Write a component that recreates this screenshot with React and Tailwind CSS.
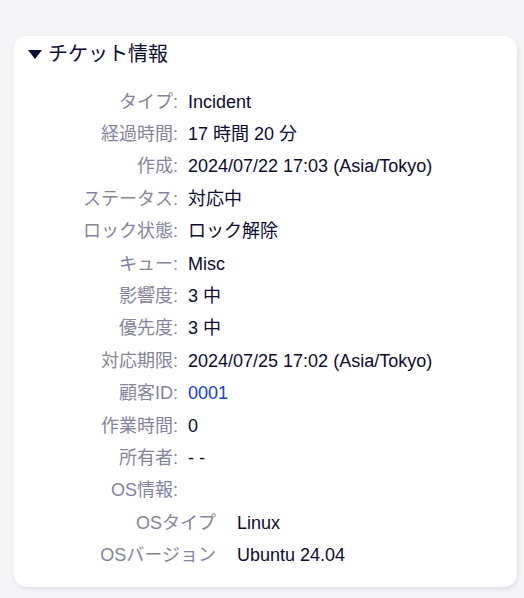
const rows = [
  { label: "タイプ:", value: "Incident" },
  { label: "経過時間:", value: "17 時間 20 分" },
  { label: "作成:", value: "2024/07/22 17:03 (Asia/Tokyo)" },
  { label: "ステータス:", value: "対応中" },
  { label: "ロック状態:", value: "ロック解除" },
  { label: "キュー:", value: "Misc" },
  { label: "影響度:", value: "3 中" },
  { label: "優先度:", value: "3 中" },
  { label: "対応期限:", value: "2024/07/25 17:02 (Asia/Tokyo)" },
  { label: "顧客ID:", value: "0001", link: true },
  { label: "作業時間:", value: "0" },
  { label: "所有者:", value: "- -" },
  { label: "OS情報:", value: "" },
];

const osRows = [
  { label: "OSタイプ", value: "Linux" },
  { label: "OSバージョン", value: "Ubuntu 24.04" },
];

export default function App() {
  return (
    <div
      className="min-h-[598px] bg-[#f5f5f8] pt-[36px] px-[14px] pb-[11px]"
      style={{ fontFamily: '"Liberation Sans", Arial, "Noto Sans CJK JP", sans-serif' }}
    >
      <section className="h-[551px] w-[503px] rounded-[13px] bg-white px-[14px] pt-[1px] shadow-[1px_2px_4px_rgba(40,40,80,0.12)]">
        {/* 見出し */}
        <div className="flex h-[34px] items-center gap-[6px] text-[20px] text-[#0b0b33]">
          <svg width="14" height="9" viewBox="0 0 14 9" className="mt-[1px]">
            <path d="M0 0 H14 L7 9 Z" fill="#0b0b33" />
          </svg>
          <span>チケット情報</span>
        </div>

        <div className="mt-[15px] text-[18px]">
          {rows.map((r) => (
            <div key={r.label} className="flex h-[32.4px] items-center">
              <div className="w-[150px] text-right text-[#8583a0]">{r.label}</div>
              <div className={`pl-[10px] ${r.link ? "text-[#1040f0]" : "text-[#0b0b33]"}`}>
                {r.value}
              </div>
            </div>
          ))}
          {/* OS情報の詳細 */}
          {osRows.map((r) => (
            <div key={r.label} className="flex h-[32.4px] items-center">
              <div className="w-[188px] text-right text-[#8583a0]">{r.label}</div>
              <div className="pl-[21px] text-[#0b0b33]">{r.value}</div>
            </div>
          ))}
        </div>
      </section>
    </div>
  );
}
